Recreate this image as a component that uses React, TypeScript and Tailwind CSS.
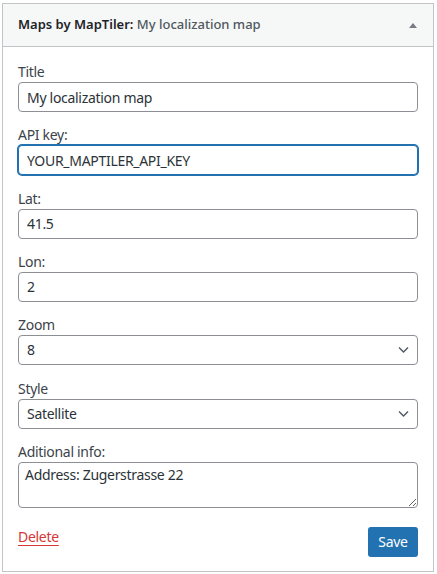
import React from 'react';

const font = { fontFamily: '"Noto Sans", "Liberation Sans", sans-serif' };

const inputCls =
    'block h-[30px] w-full rounded-[4px] border border-[#8c8f94] bg-white px-2 text-sm tracking-[-0.3px] text-[#2c3338] outline-none';

const Label: React.FC<{ children: React.ReactNode }> = ({ children }) => (
    <label className="block h-5 text-sm leading-5 tracking-[-0.3px] text-[#3c434a]">
        {children}
    </label>
);

const Chevron = () => (
    <svg
        className="pointer-events-none absolute right-[9px] top-1/2 -translate-y-1/2"
        width="11"
        height="7"
        viewBox="0 0 11 7"
        fill="none"
    >
        <path d="M1 1l4.5 4.5L10 1" stroke="#50575e" strokeWidth="1.4" />
    </svg>
);

const SelectField: React.FC<{ label: string; value: string; options: string[] }> = ({
    label,
    value,
    options,
}) => (
    <div>
        <Label>{label}</Label>
        <div className="relative">
            <select
                defaultValue={value}
                className={`${inputCls} appearance-none pr-6`}
                style={font}
            >
                {options.map((o) => (
                    <option key={o}>{o}</option>
                ))}
            </select>
            <Chevron />
        </div>
    </div>
);

const TextField: React.FC<{ label: string; value: string; focused?: boolean }> = ({
    label,
    value,
    focused,
}) => (
    <div>
        <Label>{label}</Label>
        <input
            type="text"
            defaultValue={value}
            className={`${inputCls} ${
                focused ? 'border-[#2271b1] shadow-[0_0_0_1px_#2271b1]' : ''
            }`}
            style={font}
        />
    </div>
);

export default function App() {
    return (
        <div className="pl-[2px] pt-[3px]" style={font}>
            <div className="w-[432px] border border-[#c3c4c7] bg-white">
                {/* header */}
                <div className="flex h-[43px] items-center justify-between border-b border-[#c3c4c7] bg-[#f6f7f7] pl-[15px] pr-[16px]">
                    <h3 className="text-[13px] font-semibold text-[#1d2327]">
                        Maps by MapTiler:{' '}
                        <span className="font-medium text-[#50575e]">My localization map</span>
                    </h3>
                    <svg width="8" height="5" viewBox="0 0 8 5">
                        <path d="M0 5L4 0l4 5z" fill="#787c82" />
                    </svg>
                </div>

                {/* form */}
                <div className="px-[15px] pb-[14px] pt-[15px]">
                    <div className="flex flex-col gap-[13.33px]">
                        <TextField label="Title" value="My localization map" />
                        <TextField label="API key:" value="YOUR_MAPTILER_API_KEY" focused />
                        <TextField label="Lat:" value="41.5" />
                        <TextField label="Lon:" value="2" />
                        <SelectField
                            label="Zoom"
                            value="8"
                            options={['1', '2', '3', '4', '5', '6', '7', '8', '9', '10']}
                        />
                        <SelectField
                            label="Style"
                            value="Satellite"
                            options={['Streets', 'Outdoor', 'Satellite', 'Topo']}
                        />
                        <div>
                            <Label>Aditional info:</Label>
                            <textarea
                                defaultValue="Address: Zugerstrasse 22"
                                className="block h-[46px] w-full rounded-[4px] border border-[#8c8f94] bg-white px-[6px] py-[2px] text-sm tracking-[-0.3px] text-[#2c3338] outline-none"
                                style={font}
                            />
                        </div>
                    </div>

                    <div className="mt-[19px] flex items-start justify-between">
                        <a
                            href="#"
                            className="text-sm tracking-[-0.3px] text-[#d63638] underline underline-offset-[3px]"
                        >
                            Delete
                        </a>
                        <button
                            type="button"
                            className="h-[30px] w-[50px] rounded-[3px] bg-[#2271b1] text-sm tracking-[-0.3px] text-white"
                        >
                            Save
                        </button>
                    </div>
                </div>
            </div>
        </div>
    );
}
